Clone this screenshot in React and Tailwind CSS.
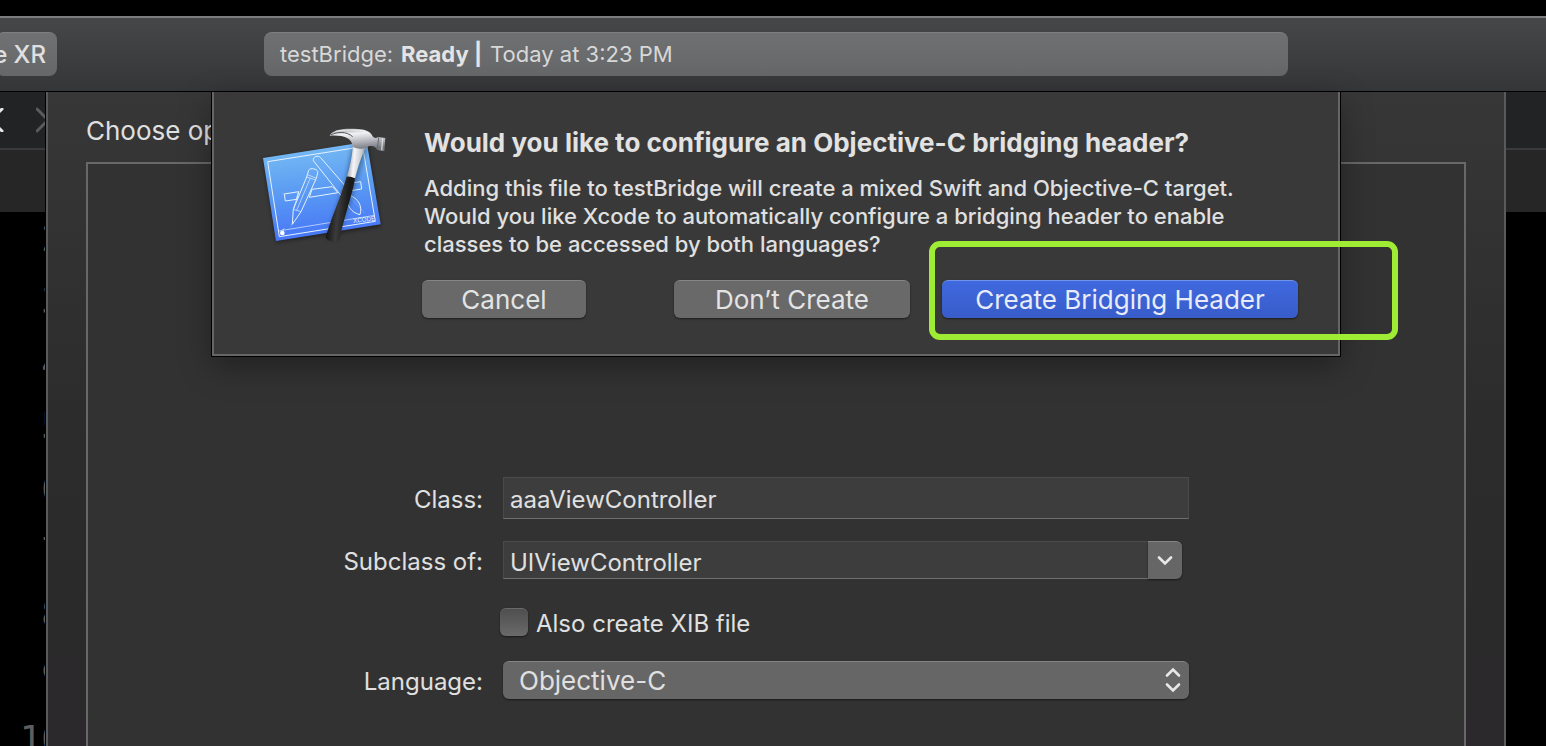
const LINES = [1, 2, 3, 4, 5, 6, 7, 8, 9, 10];

const pushButton =
  "flex h-[38px] items-center justify-center rounded-md border-t border-[#858585] bg-[#696969] text-[26px] text-[#e4e4e4] shadow-[0_1px_2px_rgba(0,0,0,0.5)]";

function XcodeIcon() {
  return (
    <svg viewBox="0 0 450 420" className="h-[140px] w-[150px] shrink-0" aria-hidden="true">
      <defs>
        <linearGradient id="sheet" x1="0.4" y1="0" x2="0.55" y2="1">
          <stop offset="0" stopColor="#79bdf3" />
          <stop offset="0.45" stopColor="#5c9df3" />
          <stop offset="1" stopColor="#4472f6" />
        </linearGradient>
        <linearGradient id="metal" x1="0" y1="0" x2="0.25" y2="1">
          <stop offset="0" stopColor="#8d9096" />
          <stop offset="0.3" stopColor="#f1f2f4" />
          <stop offset="0.65" stopColor="#b4b7bd" />
          <stop offset="1" stopColor="#75777d" />
        </linearGradient>
        <linearGradient id="neck" x1="0" y1="0" x2="1" y2="0.15">
          <stop offset="0" stopColor="#7d8189" />
          <stop offset="0.4" stopColor="#f4f5f7" />
          <stop offset="0.75" stopColor="#c3c8d0" />
          <stop offset="1" stopColor="#6d7078" />
        </linearGradient>
        <linearGradient id="grip" x1="0" y1="0" x2="1" y2="0.2">
          <stop offset="0.2" stopColor="#161616" />
          <stop offset="0.5" stopColor="#3b3b3b" />
          <stop offset="0.8" stopColor="#1b1b1b" />
        </linearGradient>
        <filter id="soft" x="-30%" y="-30%" width="160%" height="160%">
          <feGaussianBlur stdDeviation="6" />
        </filter>
      </defs>
      <path d="M40 132 352 86 392 334 80 382Z" fill="#000" opacity="0.45" filter="url(#soft)" />
      <path d="M39 129 350 80 392 328 78 378Z" fill="url(#sheet)" />
      <g fill="none" stroke="#e6f2ff" strokeWidth="3" strokeLinejoin="round">
        <path d="M53 140 338 95 376 319 88 365Z" />
        <path d="M85 348 374 301" strokeWidth="2" />
        <path d="M103 237 146 230 140 253 106 258Z" />
        <path d="M186 223 247 215 264 233 178 247Z" />
        <path d="M312 203 332 200 335 222 304 227" />
        <path d="M190 137C188 125 204 119 212 128L292 220 275 244Z" />
        <path d="M176 166C180 156 207 162 203 174L199 190 153 290 127 328 130 283 170 186Z" />
        <path d="M173 179 199 190M170 186 197 195M130 283 153 290M146 230 131 281M181 189 140 286" strokeWidth="2" />
        <path d="M298 240C325 252 338 272 330 299 310 294 298 282 292 262" />
        <path d="M96 236 116 234M122 335 130 319M276 218 345 296" strokeWidth="1" opacity="0.6" />
      </g>
      <text x="0" y="0" transform="translate(310 324) rotate(-6)" fontFamily="Inter, sans-serif" fontSize="19" fill="#e6f2ff">
        XCODE
      </text>
      <ellipse cx="97" cy="354" rx="7" ry="7" fill="#fff" />
      <path d="M97 346 102 341" stroke="#fff" strokeWidth="3" />
      <path d="M306 96 352 96 302 260 262 376 228 370 288 190Z" fill="#123" opacity="0.4" filter="url(#soft)" />
      <path d="M309 88C306 135 297 162 291 186L315 190C323 160 335 120 347 100L352 86Z" fill="url(#neck)" />
      <path d="M239 62C249 44 280 40 322 42 348 43 361 50 367 62 372 70 379 70 384 66L406 69 403 109 382 105C377 94 367 91 356 94 347 99 340 103 330 101 314 100 304 94 306 86 301 68 278 59 239 62Z" fill="url(#metal)" />
      <path d="M242 60C262 50 288 48 308 65" fill="none" stroke="#55585e" strokeWidth="3" />
      <path d="M256 49C280 44 325 43 347 49" fill="none" stroke="#fff" strokeWidth="3" opacity="0.8" />
      <path d="M386 67 382 104" stroke="#62656b" strokeWidth="3" />
      <path d="M398 70 395 106" stroke="#f5f5f5" strokeWidth="4" opacity="0.7" />
      <path d="M290 185C297 183 307 186 315 190 311 222 292 276 267 374 260 384 234 380 227 368 240 318 276 236 290 185Z" fill="url(#grip)" />
    </svg>
  );
}

function Editor({ side }) {
  const left = side === "left";
  return (
    <div className={left ? "w-[46px] shrink-0 overflow-hidden border-r border-black" : "w-10 shrink-0 overflow-hidden bg-black"}>
      <div className="flex h-[58px] items-center gap-8 border-b-2 border-[#3a3a3c] bg-[#222325]">
        {left && (
          <>
            <svg viewBox="0 0 4 24" className="h-6 w-1 shrink-0" fill="none" stroke="#e8e8e8" strokeWidth="3" strokeLinecap="round">
              <path d="M2 1-9 12 2 23" />
            </svg>
            <svg viewBox="0 0 14 26" className="h-[26px] w-3.5 shrink-0" fill="none" stroke="#5c5c5e" strokeWidth="3" strokeLinecap="round">
              <path d="M1 2 12 13 1 24" />
            </svg>
          </>
        )}
      </div>
      <div className="h-[62px] bg-[#262626]" />
      {left && (
        <ol className="-mt-[67px] flex h-[625px] w-[63px] flex-col text-right font-['DejaVu_Sans_Mono',monospace] text-[36px] leading-none text-[#5e5e5e]">
          {LINES.map((n) => (
            <li key={n} className={n === 1 ? "flex flex-1 items-center justify-end text-white" : "flex flex-1 items-center justify-end"}>
              {n}
            </li>
          ))}
        </ol>
      )}
    </div>
  );
}

function BridgingDialog() {
  return (
    <div className="absolute inset-x-0 top-0 flex justify-center">
      <section
        role="alertdialog"
        aria-labelledby="dlg-title"
        className="flex w-[1128px] gap-[22px] border-x-2 border-b-2 border-[#666] bg-[#393939] pr-10 pb-9 pl-9 shadow-[0_0_0_1px_#000,0_10px_30px_rgba(0,0,0,0.35)]"
      >
        <div className="pt-[23px]">
          <XcodeIcon />
        </div>
        <div className="flex-1 pt-9">
          <h1 id="dlg-title" className="px-0.5 text-[26px] leading-[30px] font-bold whitespace-nowrap text-[#e2e2e2]">
            Would you like to configure an Objective-C bridging header?
          </h1>
          <p className="mt-4 px-0.5 text-[22px] leading-7 font-medium whitespace-nowrap text-[#e0e0e0]">
            Adding this file to testBridge will create a mixed Swift and Objective-C target.
            <br />
            Would you like Xcode to automatically configure a bridging header to enable
            <br />
            classes to be accessed by both languages?
          </p>
          <div className="mt-[22px] flex">
            <button className={`${pushButton} w-[164px]`}>Cancel</button>
            <button className={`${pushButton} mr-8 ml-auto w-[236px]`}>Don’t Create</button>
            <div className="relative">
              <button className="flex h-[38px] w-[356px] items-center justify-center rounded-md border-t border-[#6f92ea] bg-linear-to-b from-[#4069e0] to-[#385cc8] text-[26px] text-[#e8ecf8] shadow-[0_1px_2px_rgba(0,0,0,0.5)]">
                Create Bridging Header
              </button>
              <div className="pointer-events-none absolute -top-[39px] -right-[100px] -bottom-[22px] -left-[13px] rounded-[11px] border-6 border-[#9eec34]" />
            </div>
          </div>
        </div>
      </section>
    </div>
  );
}

function OptionsForm() {
  const label = "pt-1 text-right text-[24px] leading-8 whitespace-nowrap";
  return (
    <form className="grid grid-cols-[395px_686px] content-start items-center gap-x-5 gap-y-[22px] pt-[313px]">
      <label htmlFor="class" className={label}>Class:</label>
      <input
        id="class"
        defaultValue="aaaViewController"
        className="h-[42px] w-full border border-[#4a4a4a] border-b-[#6e6e6e] bg-[#3d3d3d] px-1.5 pt-0.5 text-[24px] outline-none"
      />
      <label htmlFor="subclass" className={label}>Subclass of:</label>
      <div className="flex h-[38px] pr-[7px]">
        <input
          id="subclass"
          defaultValue="UIViewController"
          className="min-w-0 flex-1 border border-r-0 border-[#4a4a4a] border-b-[#6e6e6e] bg-[#3d3d3d] px-1.5 pt-1.5 text-[24px] outline-none"
        />
        <button type="button" aria-label="Show classes" className="flex w-[34px] items-center justify-center rounded-r-md border-t border-[#858585] bg-[#666] shadow-[0_1px_2px_rgba(0,0,0,0.5)]">
          <svg viewBox="0 0 16 10" className="h-2.5 w-4" fill="none" stroke="#e8e8e8" strokeWidth="2.6" strokeLinecap="round">
            <path d="M2 1.5 8 7.5 14 1.5" />
          </svg>
        </button>
      </div>
      <div className="col-start-2 -ml-[3px] flex h-[38px] items-center gap-2 pt-1">
        <input
          id="xib"
          type="checkbox"
          className="size-7 appearance-none rounded-md border-t border-[#6a6a6a] bg-linear-to-b from-[#4f4f4f] to-[#6a6a6a] shadow-[0_1px_2px_rgba(0,0,0,0.5)]"
        />
        <label htmlFor="xib" className="pt-1 text-[24px] leading-8">Also create XIB file</label>
      </div>
      <label htmlFor="language" className={label}>Language:</label>
      <div className="relative">
        <select
          id="language"
          className="block h-[38px] w-full appearance-none rounded-md border-t border-[#858585] bg-[#666] px-4 text-[26px] leading-[37px] shadow-[0_1px_2px_rgba(0,0,0,0.5)] outline-none"
        >
          <option>Objective-C</option>
        </select>
        <svg viewBox="0 0 16 26" className="pointer-events-none absolute top-1.5 right-2 h-[26px] w-4" fill="none" stroke="#e8e8e8" strokeWidth="2.6" strokeLinecap="round">
          <path d="M2 8.5 8 2.5 14 8.5M2 17.5 8 23.5 14 17.5" />
        </svg>
      </div>
    </form>
  );
}

export default function App() {
  return (
    <div className="flex h-screen flex-col overflow-hidden bg-black pt-4 font-['Inter','Liberation_Sans',sans-serif] text-[#e0e0e0]">
      <header className="flex h-[76px] shrink-0 items-start border-t-2 border-b border-t-[#7c7c7c] border-b-black bg-linear-to-b from-[#464749] to-[#353638] pt-3.5">
        <button className="-ml-1 flex h-11 w-[61px] items-center justify-end rounded-lg border-t border-[#7e7f80] bg-linear-to-b from-[#707173] to-[#666769] pr-[11px] text-[24px] font-medium whitespace-nowrap">
          e XR
        </button>
        <div className="mr-[258px] ml-[207px] flex h-11 flex-1 items-center gap-2 rounded-lg border-t border-[#7e7f80] bg-linear-to-b from-[#6f7072] to-[#666769] px-4 text-[22px] text-[#d8d8d8]">
          <span>testBridge:</span>
          <strong className="font-bold text-[#e4e4e4]">Ready |</strong>
          <span>Today at 3:23 PM</span>
        </div>
      </header>
      <div className="flex min-h-0 flex-1">
        <Editor side="left" />
        <main className="relative flex flex-1 flex-col border-x-2 border-[#5a5a5a] bg-linear-to-b from-[#363736] via-[#2b2c2b] to-[#2b292b] px-[38px]">
          <h2 className="pt-6 text-[26px] leading-[30px]">Choose op</h2>
          <div className="mt-4 flex-1 border-x-2 border-t-2 border-[#686868] bg-[#323232]">
            <OptionsForm />
          </div>
          <BridgingDialog />
        </main>
        <Editor side="right" />
      </div>
    </div>
  );
}
